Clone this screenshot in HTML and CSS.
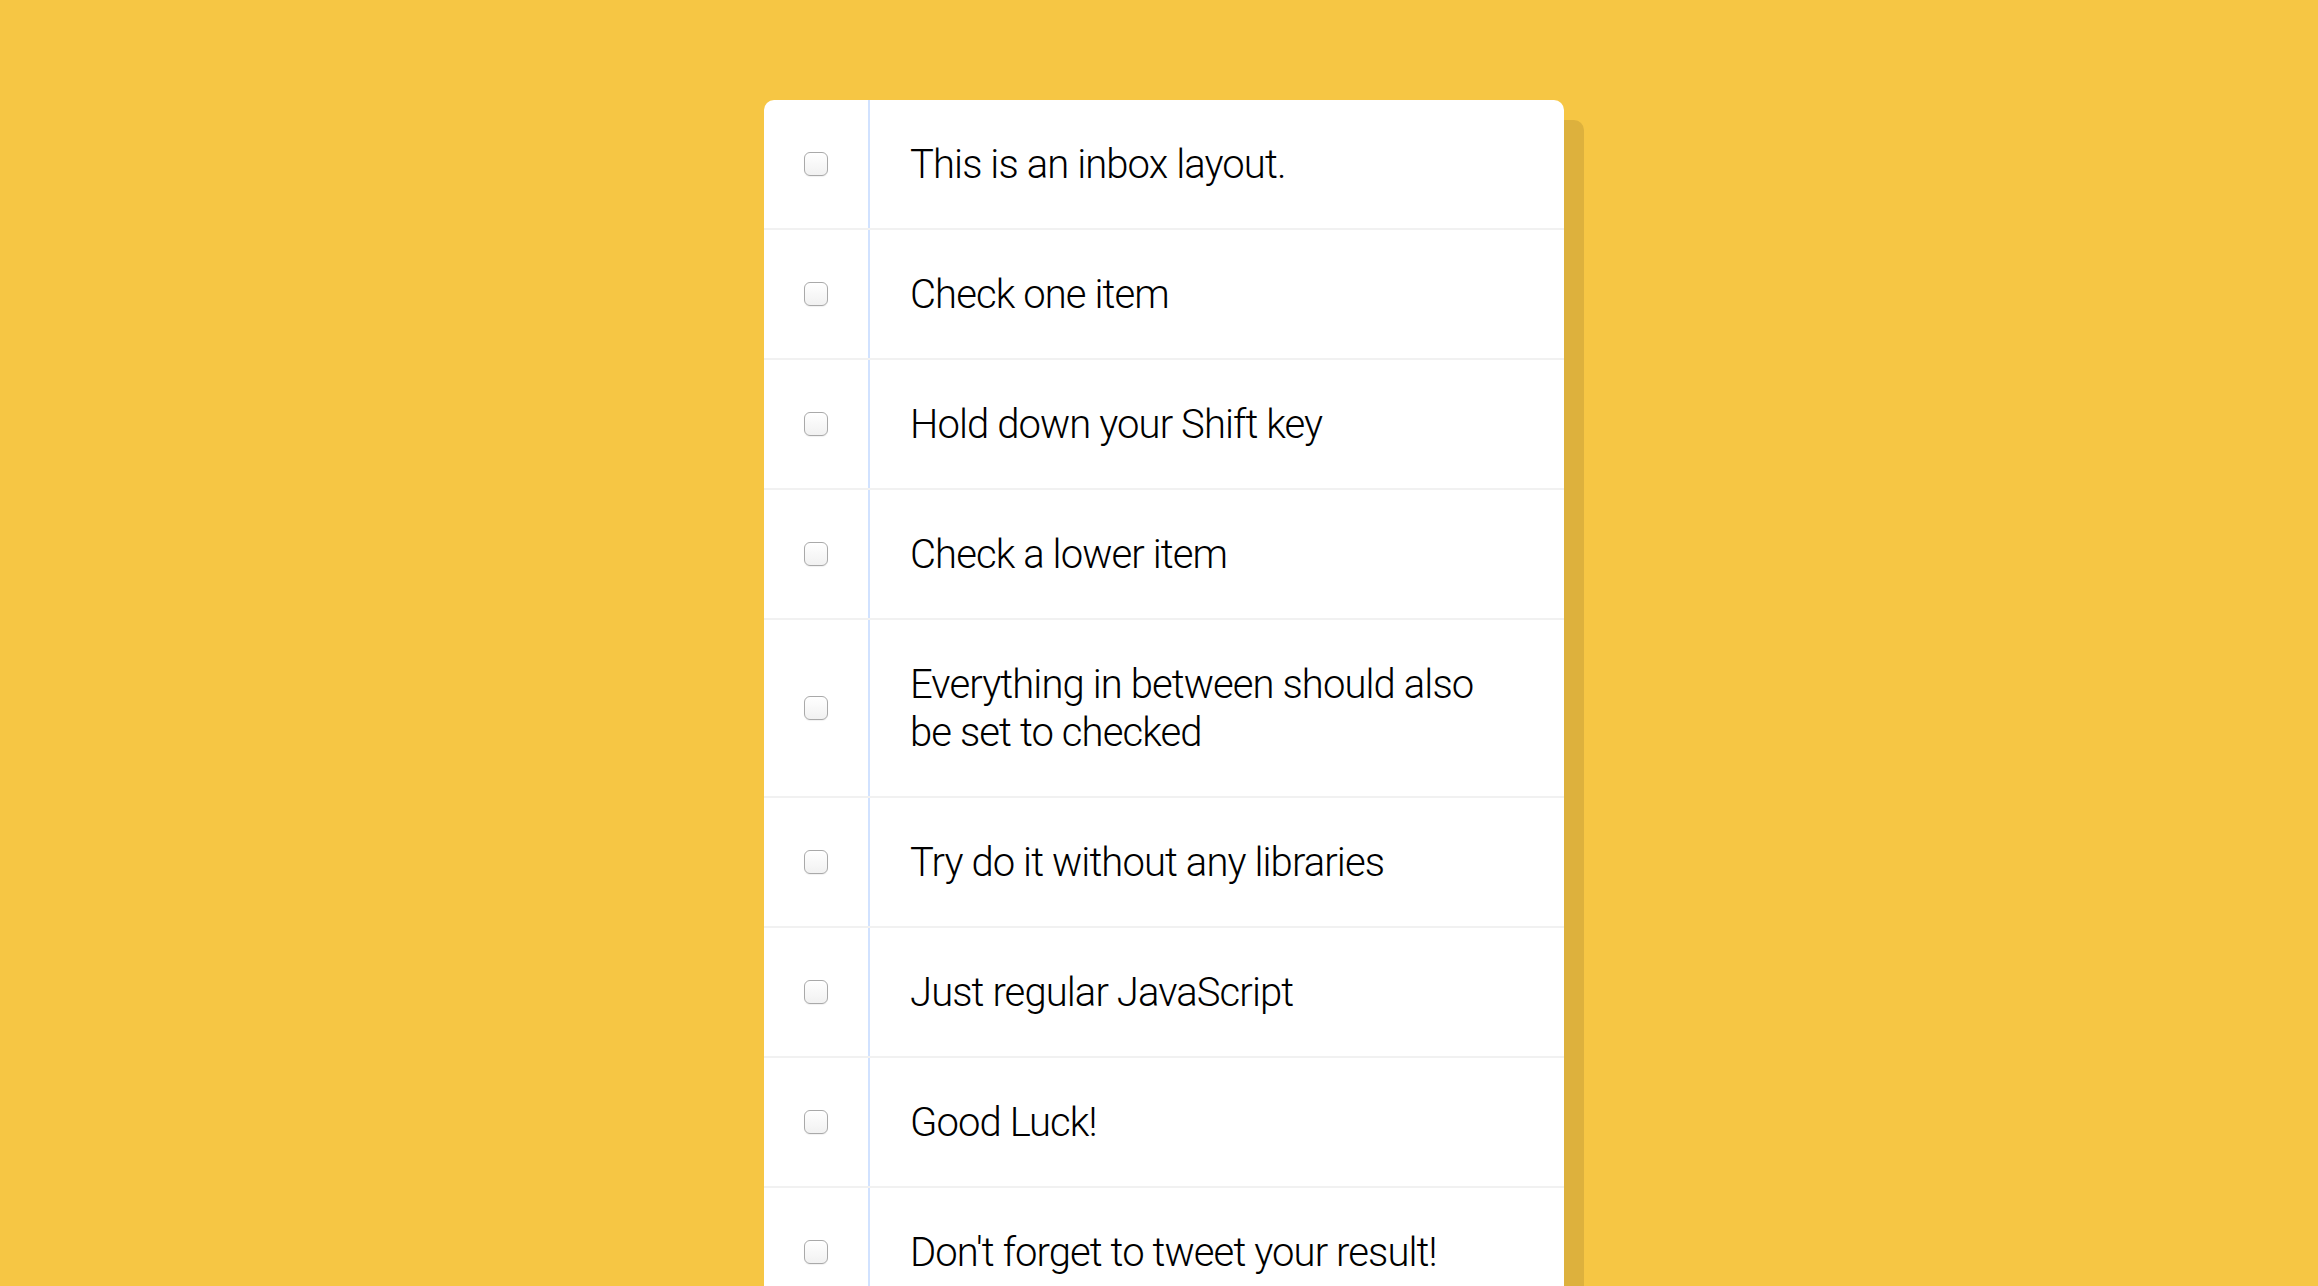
FILE: index.html
```html
<!DOCTYPE html>
<html>
<head>
<meta charset="utf-8">
<title>Hold Shift to Check Multiple Checkboxes!</title>
<link rel="stylesheet" href="styles.css">
</head>
<body>
<div class="inbox">
  <div class="item"><input type="checkbox"><p>This is an inbox layout.</p></div>
  <div class="item"><input type="checkbox"><p>Check one item</p></div>
  <div class="item"><input type="checkbox"><p>Hold down your Shift key</p></div>
  <div class="item"><input type="checkbox"><p>Check a lower item</p></div>
  <div class="item"><input type="checkbox"><p>Everything in between should also be set to checked</p></div>
  <div class="item"><input type="checkbox"><p>Try do it without any libraries</p></div>
  <div class="item"><input type="checkbox"><p>Just regular JavaScript</p></div>
  <div class="item"><input type="checkbox"><p>Good Luck!</p></div>
  <div class="item"><input type="checkbox"><p>Don't forget to tweet your result!</p></div>
</div>
</body>
</html>
```
FILE: styles.css
```css
html {
  background: #f6c644;
  overflow: hidden;
}
body {
  margin: 0;
  padding-left: 10px;
  font-family: "Liberation Sans", Arial, sans-serif;
}
.inbox {
  width: 800px;
  margin: 100px auto;
  background: #fff;
  border-radius: 10px;
  box-shadow: 20px 20px 0 rgba(0, 0, 0, 0.1);
}
.item {
  display: flex;
  align-items: center;
  border-bottom: 2px solid #f1f1f1;
}
.item:last-child {
  border-bottom: 0;
}
.item input[type="checkbox"] {
  -webkit-appearance: none;
  appearance: none;
  width: 24px;
  height: 24px;
  margin: 0 40px;
  flex: none;
  box-sizing: border-box;
  border: 1.5px solid #a9a9a9;
  border-radius: 6px;
  background: linear-gradient(#ffffff, #f1f1f1);
  box-shadow: 0 1px 1px rgba(0, 0, 0, 0.06);
}
.item p {
  margin: 0;
  padding: 41px 56px 39px 40px;
  flex: 1;
  font-family: "Roboto", "Liberation Sans", sans-serif;
  font-weight: 300;
  font-size: 40px;
  line-height: 48px;
  letter-spacing: -0.9px;
  color: #000;
  border-left: 2px solid #d1e2ff;
  align-self: stretch;
  display: flex;
  align-items: center;
}
```
